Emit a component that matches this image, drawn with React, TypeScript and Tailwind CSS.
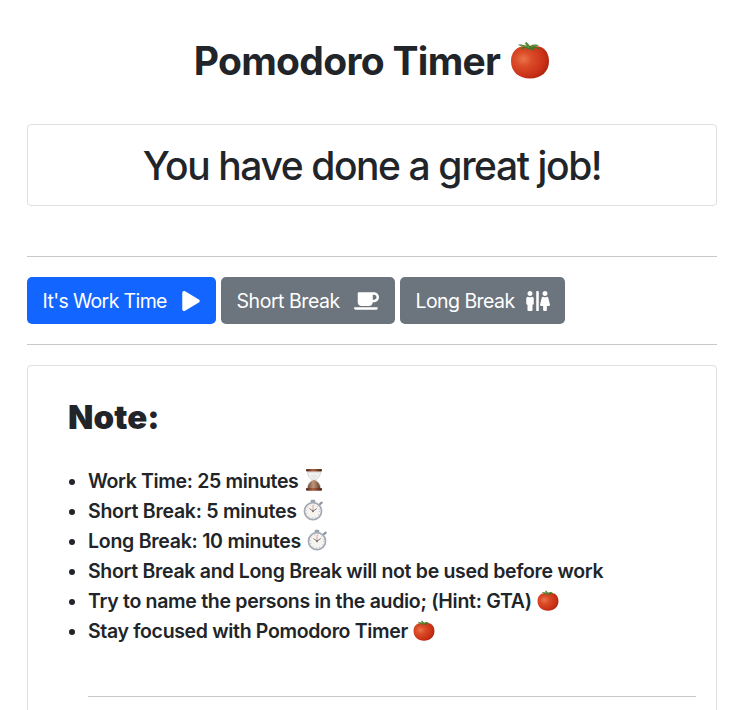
import React from "react";
import { FaPlay, FaCoffee, FaRestroom } from "react-icons/fa";

function Tomato({ className }: { className: string }) {
  return (
    <svg viewBox="0 0 40 40" className={className} aria-hidden="true">
      <defs>
        <radialGradient id="tomato-skin" cx="0.33" cy="0.4" r="0.75">
          <stop offset="0" stopColor="#ea744c" />
          <stop offset="0.3" stopColor="#db4c28" />
          <stop offset="0.75" stopColor="#c82f16" />
          <stop offset="1" stopColor="#9c200c" />
        </radialGradient>
      </defs>
      <path d="M19 6C10 3 1 9 1 20c0 11 8 17.500 19 17.500S39 31 39 20C39 9 31 3 22 6c-1 .4-2 .4-3 0Z" fill="url(#tomato-skin)" />
      <path d="M18 7.500c-3-.5-5 .2-7.500 1.300 1-1.600 2-2.500 3.500-3.100-2-.2-4-.8-6-2 3-.4 6 .2 8.500 1.300L15 2l1.500-1L20 5c3-1.700 6-1.800 9-.8-1.600.6-3 1-4.500 1.500 3 .2 5 1.200 6.500 2.600-3.300-.5-5.500-1-8-1l1.500 2.700c-2.200-.4-3.700-1-5-2.200l-2.500 2Z" fill="#47742a" />
      <path d="M10 4.400c3 .2 6 1 9 2M21 6c2-1.200 4-1.600 6-1.700M16 2l3 4" stroke="#71a343" strokeWidth="0.8" fill="none" />
    </svg>
  );
}

function Hourglass() {
  return (
    <svg viewBox="0 0 22 24" className="relative -top-px ml-[5px] h-6 w-[22px] shrink-0" aria-hidden="true">
      <defs>
        <linearGradient id="wood" x1="0" x2="1">
          <stop offset="0" stopColor="#542719" />
          <stop offset="0.45" stopColor="#a86142" />
          <stop offset="1" stopColor="#4b2114" />
        </linearGradient>
        <linearGradient id="sand" x1="0" x2="1">
          <stop offset="0" stopColor="#75503d" />
          <stop offset="0.45" stopColor="#bd9579" />
          <stop offset="1" stopColor="#65402e" />
        </linearGradient>
      </defs>
      <path d="M4.500 4h13c0 4-2 6-5 8 3 2 5 4 5 8h-13c0-4 2-6 5-8-3-2-5-4-5-8Z" fill="#f1f1f1" stroke="#c5c5c5" strokeWidth="0.7" />
      <path d="M7 7h8c-1 2-2.500 3.200-4 4-1.500-.8-3-2-4-4Z" fill="#e9e7e5" />
      <path d="M11 11.500c3.500 2.500 6.200 4 6.200 8.500H4.800c0-4.500 2.700-6 6.200-8.500Z" fill="url(#sand)" />
      <rect x="3" y="1" width="16" height="2.600" rx="1" fill="url(#wood)" />
      <rect x="3" y="20" width="16" height="2.800" rx="1" fill="url(#wood)" />
    </svg>
  );
}

function Stopwatch() {
  return (
    <svg viewBox="0 0 24 24" className="relative -top-px ml-1 size-6 shrink-0" aria-hidden="true">
      <path d="m18 7 2.700-2.300" stroke="#89939f" strokeWidth="2.200" strokeLinecap="round" />
      <rect x="9.700" y="1.800" width="4.600" height="4" rx="1" fill="#9aa3ad" />
      <circle cx="12" cy="13.200" r="8.500" fill="#f5f4f1" stroke="#a3aab3" strokeWidth="1.700" />
      <circle cx="12" cy="13.200" r="6.500" fill="none" stroke="#888e96" strokeWidth="0.8" strokeDasharray="0.6 2.803" />
      <path d="M12 14.500V7" stroke="#ed9b89" strokeWidth="1" />
      <path d="m8.500 10.500 3.500 2.700 3.800-2.700" stroke="#666d74" strokeWidth="0.9" fill="none" />
      <circle cx="12" cy="13.200" r="0.900" fill="#6b7178" />
    </svg>
  );
}

const notes: { text: string; spacing: string; icon?: React.ReactNode }[] = [
  { text: "Work Time: 25 minutes", spacing: "tracking-[-0.35px]", icon: <Hourglass /> },
  { text: "Short Break: 5 minutes", spacing: "tracking-[-0.26px]", icon: <Stopwatch /> },
  { text: "Long Break: 10 minutes", spacing: "tracking-[-0.26px]", icon: <Stopwatch /> },
  { text: "Short Break and Long Break will not be used before work", spacing: "tracking-[-0.31px]" },
  { text: "Try to name the persons in the audio; (Hint: GTA)", spacing: "tracking-[-0.3px]", icon: <Tomato className="ml-[5px] size-[22px] shrink-0" /> },
  { text: "Stay focused with Pomodoro Timer", spacing: "tracking-[-0.33px]", icon: <Tomato className="ml-[5px] size-[22px] shrink-0" /> },
];

export default function App() {
  return (
    <main className="h-[710px] overflow-hidden bg-white pl-[27px] pr-[34px] pt-[37px] font-['Inter',sans-serif] text-[#212529]">
      <h1 className="flex h-12 items-center justify-center whitespace-nowrap text-[39px] font-bold tracking-[-0.7px]">
        <span>Pomodoro Timer</span>
        <Tomato className="ml-2.5 size-10 shrink-0" />
      </h1>

      <section className="mt-[39px] flex h-[82px] items-center justify-center rounded border border-[#dfdfdf] pt-0.5">
        <h2 className="whitespace-nowrap text-[39px] font-medium tracking-[-1.4px]">You have done a great job!</h2>
      </section>

      <hr className="mt-[50px] border-[#c8c9ca]" />

      <div className="mt-5 flex h-[47px] gap-[5px] whitespace-nowrap text-[19.500px] tracking-[-0.4px] text-white">
        <button className="flex w-[189px] items-center justify-between rounded-[5px] bg-[#1266ff] pl-[15.500px] pr-4">
          <span className="pt-0.5 tracking-[-0.62px]">It's Work Time</span>
          <FaPlay className="h-5 w-[18px]" />
        </button>
        <button className="flex w-[174px] items-center justify-between rounded-[5px] bg-[#6c757d] pl-[15.500px] pr-4">
          <span className="pt-0.5 tracking-[-0.45px]">Short Break</span>
          <FaCoffee className="h-5 w-[25px]" />
        </button>
        <button className="flex w-[165px] items-center justify-between rounded-[5px] bg-[#6c757d] px-[15.500px]">
          <span className="pt-0.5 tracking-[-0.56px]">Long Break</span>
          <FaRestroom className="h-5 w-[25px]" />
        </button>
      </div>

      <hr className="mt-5 border-[#c8c9ca]" />

      <section className="mt-5 h-[420px] rounded border border-[#dfdfdf] pl-10 pr-5 pt-[30px]">
        <h3 className="text-[33px] font-black leading-[42px] tracking-[0.1px]">Note:</h3>
        <ul className="mt-7 text-[19.500px] font-semibold leading-[30px]">
          {notes.map((note) => (
            <li key={note.text} className="flex h-[30px] items-center whitespace-nowrap">
              <span className="ml-px mr-[13px] mt-0.5 size-1.5 shrink-0 rounded-full bg-[#212529]" />
              <span className={note.spacing}>{note.text}</span>
              {note.icon}
            </li>
          ))}
        </ul>
        <hr className="ml-5 mt-[50px] border-[#c8c9ca]" />
      </section>
    </main>
  );
}
